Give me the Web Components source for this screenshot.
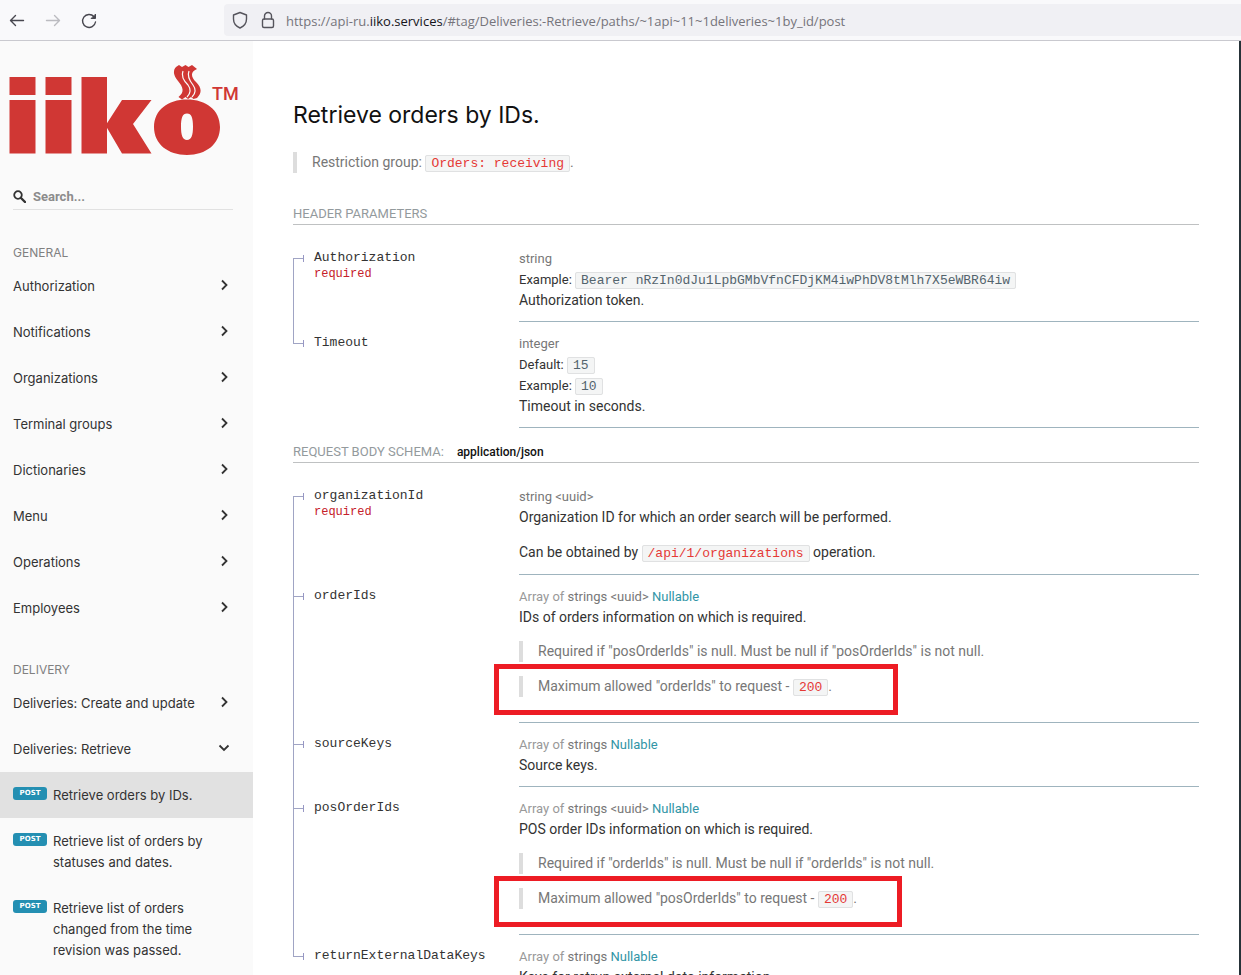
<!DOCTYPE html>
<html lang="en">
<head>
<meta charset="utf-8">
<meta name="viewport" content="width=device-width, initial-scale=1">
<title>Retrieve orders by IDs.</title>
<style>
  body { margin: 0; font-family: Roboto, sans-serif; font-size: 14px; line-height: 20px; color: #333; background: #fff; }
</style>
</head>
<body>
<docs-app>
  <browser-bar slot="bar" prefix="https://api-ru." host="iiko.services" path="/#tag/Deliveries:-Retrieve/paths/~1api~11~1deliveries~1by_id/post"></browser-bar>

  <side-nav slot="nav">
    <nav-group label="GENERAL">
      <nav-item>Authorization</nav-item>
      <nav-item>Notifications</nav-item>
      <nav-item>Organizations</nav-item>
      <nav-item>Terminal groups</nav-item>
      <nav-item>Dictionaries</nav-item>
      <nav-item>Menu</nav-item>
      <nav-item>Operations</nav-item>
      <nav-item>Employees</nav-item>
    </nav-group>
    <nav-group label="DELIVERY">
      <nav-item>Deliveries: Create and update</nav-item>
      <nav-item open>Deliveries: Retrieve</nav-item>
      <nav-item method="POST" active>Retrieve orders by IDs.</nav-item>
      <nav-item method="POST">Retrieve list of orders by statuses and dates.</nav-item>
      <nav-item method="POST">Retrieve list of orders changed from the time revision was passed.</nav-item>
    </nav-group>
  </side-nav>

  <api-operation heading="Retrieve orders by IDs.">
    <note-quote slot="intro">Restriction group: <code-chip accent>Orders: receiving</code-chip>.</note-quote>

    <param-table label="HEADER PARAMETERS">
      <param-item name="Authorization" required type="string">
        <example-line slot="meta" label="Example:">Bearer nRzIn0dJu1LpbGMbVfnCFDjKM4iwPhDV8tMlh7X5eWBR64iw</example-line>
        <param-text>Authorization token.</param-text>
      </param-item>
      <param-item name="Timeout" type="integer">
        <example-line slot="meta" label="Default:">15</example-line>
        <example-line slot="meta" label="Example:">10</example-line>
        <param-text>Timeout in seconds.</param-text>
      </param-item>
    </param-table>

    <param-table label="REQUEST BODY SCHEMA:" media="application/json">
      <param-item name="organizationId" required type="string &lt;uuid&gt;">
        <param-text>Organization ID for which an order search will be performed.</param-text>
        <param-text>Can be obtained by <code-chip href="#organizations">/api/1/organizations</code-chip> operation.</param-text>
      </param-item>
      <param-item name="orderIds" array type="strings &lt;uuid&gt;" nullable>
        <param-text>IDs of orders information on which is required.</param-text>
        <note-quote>Required if "posOrderIds" is null. Must be null if "posOrderIds" is not null.</note-quote>
        <note-quote marked="404">Maximum allowed "orderIds" to request - <code-chip accent>200</code-chip>.</note-quote>
      </param-item>
      <param-item name="sourceKeys" array type="strings" nullable>
        <param-text>Source keys.</param-text>
      </param-item>
      <param-item name="posOrderIds" array type="strings &lt;uuid&gt;" nullable>
        <param-text>POS order IDs information on which is required.</param-text>
        <note-quote>Required if "orderIds" is null. Must be null if "orderIds" is not null.</note-quote>
        <note-quote marked="408">Maximum allowed "posOrderIds" to request - <code-chip accent>200</code-chip>.</note-quote>
      </param-item>
      <param-item name="returnExternalDataKeys" array type="strings" nullable>
        <param-text>Keys for retrun external data information.</param-text>
      </param-item>
    </param-table>
  </api-operation>
</docs-app>

<script>
class Base extends HTMLElement {
  connectedCallback() {
    if (this.shadowRoot) return;
    this.attachShadow({ mode: 'open' }).innerHTML = this.view();
  }
  attr(name) {
    return (this.getAttribute(name) || '').replace(/&/g, '&amp;').replace(/</g, '&lt;').replace(/>/g, '&gt;');
  }
}

customElements.define('docs-app', class extends Base {
  view() { return `
    <style>
      :host { display: flex; flex-direction: column; height: 100vh; overflow: hidden; }
      .page { flex: 1; min-height: 0; display: flex; border-right: 2px solid #263238; }
      aside, main { overflow: auto; scrollbar-width: none; }
      aside { flex: 0 0 253px; background: #fafafa; }
      main { flex: 1; min-width: 0; }
    </style>
    <slot name="bar"></slot>
    <div class="page">
      <aside><slot name="nav"></slot></aside>
      <main><slot></slot></main>
    </div>`; }
});

customElements.define('browser-bar', class extends Base {
  view() { return `
    <style>
      :host { display: flex; align-items: center; height: 40px; background: #f9f9fb; border-bottom: 1px solid #c9c9cf; }
      .tools { display: flex; gap: 16px; padding-left: 7px; flex: none; box-sizing: border-box; width: 224px; }
      button { border: 0; padding: 0; background: none; width: 20px; height: 20px; color: #48474f; }
      button:disabled { color: #bbbbc0; }
      svg { display: block; fill: none; stroke: currentColor; stroke-width: 1.4; stroke-linecap: round; stroke-linejoin: round; }
      .address { flex: 1; min-width: 0; height: 32px; border-radius: 4px 0 0 4px; background: #f0f0f4; display: flex; align-items: center; gap: 8px; padding-left: 6px; color: #55545c; }
      .address svg { flex: none; }
      .url { font: 13px/20px "Open Sans", "Noto Sans", sans-serif; color: #75747b; white-space: nowrap; padding-top: 2px; outline: 0; }
      b { font-weight: 400; color: #15141a; }
    </style>
    <div class="tools">
      <button aria-label="Back"><svg width="20" height="20" viewBox="0 0 20 20"><path d="M16.500 10.500H4M8.500 5.500L3.500 10.500L8.500 15.500"/></svg></button>
      <button aria-label="Forward" disabled><svg width="20" height="20" viewBox="0 0 20 20"><path d="M3.500 10.500H16M11.500 5.500L16.500 10.500L11.500 15.500"/></svg></button>
      <button aria-label="Reload"><svg width="20" height="20" viewBox="0 0 20 20"><path d="M15 6.700A6.500 6.500 0 1 0 16.500 12"/><path d="M16.500 4.500V8.500H12.500z" fill="currentColor" stroke-width="1"/></svg></button>
    </div>
    <div class="address">
      <svg width="20" height="20" viewBox="0 0 20 20"><path d="M10 2.500L16.500 5V9C16.500 13 13.500 16.500 10 18C6.500 16.500 3.500 13 3.500 9V5z"/></svg>
      <svg width="20" height="20" viewBox="0 0 20 20"><rect x="4.500" y="9" width="11" height="8.500" rx="1.500"/><path d="M6.500 9V6A3.500 3.500 0 0 1 13.500 6V9"/></svg>
      <div class="url" role="textbox" aria-label="Address" contenteditable="true" spellcheck="false">${this.attr('prefix')}<b>${this.attr('host')}</b>${this.attr('path')}</div>
    </div>`; }
});

customElements.define('iiko-logo', class extends Base {
  view() { return `
    <style>
      :host { display: block; }
      svg { display: block; fill: #d03734; }
      text { font: 500 18px Roboto, sans-serif; }
    </style>
    <svg width="250" height="140" viewBox="0 41 250 140" role="img" aria-label="iiko">
      <rect x="9.500" y="77" width="26" height="18"/><rect x="9.500" y="100" width="26" height="53.500"/>
      <rect x="45.500" y="77" width="26" height="18"/><rect x="45.500" y="100" width="26" height="53.500"/>
      <rect x="81.500" y="77" width="25.500" height="76.500"/>
      <path d="M106.500 124L122 100H151.500L133 124L151.500 153.500H122L106.500 127z"/>
      <path fill-rule="evenodd" d="M187 99.500C206 99.500 220 110 220 127C220 144 206 155 187 155C168 155 154 144 154 127C154 110 168 99.500 187 99.500zM187 113.500C182.500 113.500 181 118 181 126.500C181 135 182.500 140 187 140C191.500 140 193 135 193 126.500C193 118 191.500 113.500 187 113.500z"/>
      <path d="M176 67L179 65L182 67L185.500 65L188.500 67L192 65L197 69C190 72 191 77 196 82C202 88 202 93 197 98L193.500 99L191 97L188 99L185.500 97L182 99.500L178.500 97C185 92 183 87 178 81C173 75 173 70 176 67z"/>
      <path d="M183 71C181 76 183 80 188 85C191 89 191 93 187 97M189 71C187 76 189 80 193 85C196 89 196 93 192 97" fill="none" stroke="#fafafa" stroke-width="1.200"/>
      <text x="212" y="100">TM</text>
    </svg>`; }
});

customElements.define('side-nav', class extends Base {
  view() { return `
    <style>
      :host { display: block; }
      label { display: flex; align-items: center; gap: 7px; margin: 3px 20px 4px 13px; height: 25px; border-bottom: 1px solid #e1e1e1; color: #333; }
      input { flex: 1; min-width: 0; border: 0; padding: 0; outline: 0; background: none; font: bold 13px/20px Roboto, sans-serif; color: #333; }
      input::placeholder { color: #8c8c8c; opacity: 1; }
    </style>
    <iiko-logo></iiko-logo>
    <label>
      <svg width="13" height="13" viewBox="0 0 13 13" fill="none" stroke="currentColor"><circle cx="5" cy="5" r="3.800" stroke-width="1.800"/><path d="M8 8L12 12" stroke-width="2.400" stroke-linecap="round"/></svg>
      <input type="search" placeholder="Search..." aria-label="Search">
    </label>
    <nav><slot></slot></nav>`; }
});

customElements.define('nav-group', class extends Base {
  view() { return `
    <style>
      :host { display: block; }
      h3 { margin: 0; padding: 29px 13px 0; font: 12px/20px Inter, sans-serif; color: #808080; }
    </style>
    <h3>${this.attr('label')}</h3>
    <slot></slot>`; }
});

customElements.define('nav-item', class extends Base {
  view() {
    const method = this.attr('method');
    const chevron = this.hasAttribute('open') ? 'M2.500 4.500L7 9L11.500 4.500' : 'M5 2.500L9.500 7L5 11.500';
    return `
    <style>
      :host { display: block; }
      :host([active]) { background: #e1e1e1; }
      a { display: flex; align-items: flex-start; gap: 6px; padding: 13px 22px 12px 13px; font: 13px/21px Inter, sans-serif; color: #333; text-decoration: none; }
      .label { flex: 1; min-width: 0; }
      .method { flex: none; width: 34px; height: 13px; margin-top: 2px; border-radius: 3px; background: #248fb2; color: #fff; font: bold 7px/13px "DejaVu Sans", sans-serif; text-align: center; }
      a:has(.method) { padding-right: 40px; }
      svg { flex: none; margin-top: 2px; }
    </style>
    <a href="#">${method ? `<span class="method">${method}</span>` : ''}<span class="label"><slot></slot></span>${method ? '' : `<svg width="14" height="14" viewBox="0 0 14 14" fill="none" stroke="#333" stroke-width="1.800"><path d="${chevron}"/></svg>`}</a>`;
  }
});

customElements.define('api-operation', class extends Base {
  view() { return `
    <style>
      :host { display: block; padding: 60px 40px 40px; }
      h2 { margin: 0 0 23px; font: 23px/28px Inter, sans-serif; color: #111; }
    </style>
    <h2>${this.attr('heading')}</h2>
    <slot name="intro"></slot>
    <slot></slot>`; }
});

customElements.define('note-quote', class extends Base {
  view() { return `
    <style>
      :host { display: block; margin: 14px 0; position: relative; }
      blockquote { margin: 0; padding-left: 15px; border-left: 4px solid #ddd; line-height: 21px; color: #777; }
      :host([slot=intro]) { margin: 0 0 16px; }
      .mark { position: absolute; top: -12px; left: -25px; height: 51px; box-sizing: border-box; border: 5px solid #ed1c24; }
    </style>
    <blockquote><slot></slot></blockquote>
    ${this.hasAttribute('marked') ? `<div class="mark" style="width:${this.attr('marked')}px"></div>` : ''}`; }
});

customElements.define('code-chip', class extends Base {
  view() {
    const href = this.attr('href');
    const code = '<code><slot></slot></code>';
    return `
    <style>
      :host { display: inline; color: #53646d; }
      :host([accent]), :host([href]) { color: #e53935; }
      a { color: inherit; text-decoration: none; }
      code { padding: 0 5px; border: 1px solid #e0e1e2; border-radius: 2px; background: #f4f5f5; font: 13px/15px "Liberation Mono", monospace; }
    </style>
    ${href ? `<a href="${href}">${code}</a>` : code}`.trimEnd();
  }
});

customElements.define('example-line', class extends Base {
  view() { return `
    <style>
      :host { display: block; font-size: 13px; line-height: 21px; color: #333; }
    </style>
    <span>${this.attr('label')}</span> <code-chip>${this.textContent}</code-chip>`; }
});

customElements.define('param-text', class extends Base {
  view() { return `
    <style>
      :host { display: block; line-height: 20px; }
      :host(:not(:first-of-type)) { margin-top: 14px; line-height: 22px; }
      p { margin: 0; }
    </style>
    <p><slot></slot></p>`; }
});

customElements.define('param-item', class extends Base {
  view() { return `
    <style>
      :host { display: flow-root; padding: 11px 0; }
      .type { font-size: 13px; line-height: 21px; color: #777; }
      .of { color: #999; }
      .nullable { color: #3195a6; }
    </style>
    <div class="type">${this.hasAttribute('array') ? '<span class="of">Array of</span> ' : ''}<span>${this.attr('type')}</span>${this.hasAttribute('nullable') ? ' <span class="nullable">Nullable</span>' : ''}</div>
    <slot name="meta"></slot>
    <slot></slot>`; }
});

customElements.define('param-table', class extends Base {
  view() {
    const rows = [...this.children].map((item, i) => {
      item.slot = 'row-' + i;
      const required = item.hasAttribute('required') ? '<div class="required">required</div>' : '';
      return `<tr><th scope="row"><span class="stem"></span><span class="tick"></span>${item.getAttribute('name')}${required}</th><td><slot name="row-${i}"></slot></td></tr>`;
    }).join('');
    return `
    <style>
      :host { display: block; margin-top: 14px; }
      :host(:first-of-type) { margin-top: 31px; }
      h5 { display: flex; gap: 13px; margin: 0 0 12px; border-bottom: 1px solid #bfc1c2; font: 13px/20px Roboto, sans-serif; color: #939a9d; }
      h5 b { font-size: 12px; font-weight: 500; color: #111; }
      table { width: 100%; border-collapse: separate; border-spacing: 0; table-layout: fixed; }
      th { position: relative; box-sizing: border-box; width: 226px; padding: 13px 0 0 21px; vertical-align: top; text-align: left; font: 13px/16px "Liberation Mono", monospace; color: #333; }
      td { padding: 0; border-bottom: 1px solid #9fb4be; }
      .required { font-size: 12px; color: #c5202a; }
      .stem { position: absolute; left: 0; top: 0; bottom: 0; border-left: 1px solid #a0a4c4; }
      tr:first-child .stem { top: 21px; }
      tr:last-child .stem { bottom: auto; height: 22px; }
      tr:first-child:last-child .stem { display: none; }
      .tick { position: absolute; left: 0; top: 18px; width: 10px; height: 7px; border-right: 1px solid #9797c4; background: linear-gradient(#a0a4c4, #a0a4c4) 0 3px / 100% 1px no-repeat; }
    </style>
    <h5><span>${this.attr('label')}</span>${this.hasAttribute('media') ? `<b>${this.attr('media')}</b>` : ''}</h5>
    <table><tbody>${rows}</tbody></table>`;
  }
});
</script>
</body>
</html>
